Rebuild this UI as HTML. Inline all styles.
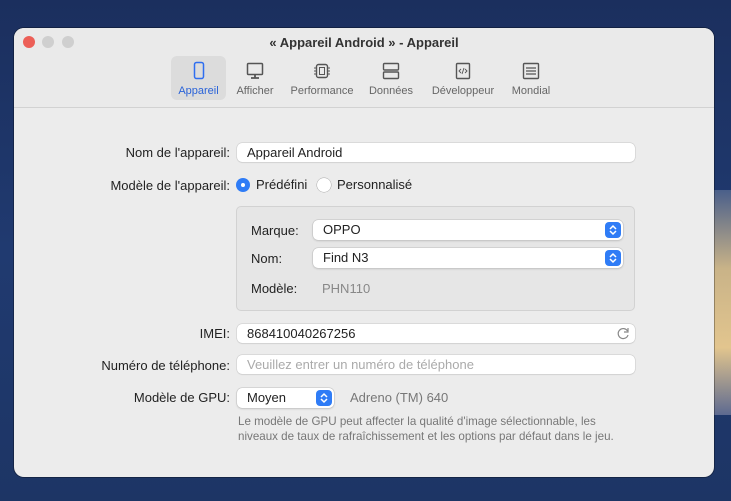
<!DOCTYPE html><html><head><meta charset="utf-8"><style>
*{margin:0;padding:0;box-sizing:border-box}
body{width:731px;height:501px;overflow:hidden;position:relative;font-family:"Liberation Sans",sans-serif;font-size:13px;color:#222;
background:linear-gradient(180deg,#1b2f5e 0%,#203a70 50%,#1d3565 100%)}
.strip{position:absolute;left:712px;top:190px;width:19px;height:225px;background:linear-gradient(180deg,#4a5f8a,#c9b388 35%,#e2c58e 70%,#5d6a90)}
.win{position:absolute;left:14px;top:28px;width:700px;height:449px;background:#ececec;border-radius:10px;overflow:hidden;box-shadow:0 0 0 1px rgba(0,0,0,.3)}
.tb{position:absolute;left:0;top:0;width:700px;height:80px;background:#eaeaea;border-bottom:1px solid #d2d2d2}
.dot{position:absolute;top:8px;width:12px;height:12px;border-radius:50%}
.title{position:absolute;top:7px;left:0;width:700px;text-align:center;font-weight:bold;font-size:13px;color:#333}
.tab{position:absolute;top:28px;height:44px;text-align:center;font-size:11px;color:#666}
.tab span{position:absolute;bottom:3px;left:0;right:0;white-space:nowrap}
.tab svg{position:absolute;top:5px;left:50%;margin-left:-10px}
.a{position:absolute}
.lbl{position:absolute;text-align:right;width:220px;left:0}
.fld{position:absolute;background:#fff;border-radius:5px;box-shadow:0 0 0 .5px #c8c8c8,0 1px 1px rgba(0,0,0,.08);padding-left:10px;line-height:19px}
.pop{position:absolute;background:#fff;border-radius:5px;box-shadow:0 0 0 .5px #c0c0c0,0 1px 2px rgba(0,0,0,.15);padding-left:10px;line-height:20px}
.arr{position:absolute;right:2px;top:2px;width:16px;height:16px;background:#2f7cf6;border-radius:4px}
</style></head><body>
<div class="strip"></div>
<div class="win">
<div class="tb">
<div class="dot" style="left:9px;background:#ec5f57"></div>
<div class="dot" style="left:28px;background:#cfcfcf"></div>
<div class="dot" style="left:48px;background:#cfcfcf"></div>
<div class="title">« Appareil Android » - Appareil</div>
<div class="tab" style="left:157px;width:55px;background:#dcdcdc;border-radius:6px;color:#2a63d8"><svg width="20" height="20"><rect x="5.5" y="1.5" width="9" height="16" rx="2" fill="none" stroke="#2f6ef0" stroke-width="1.5"/></svg><span>Appareil</span></div>
<div class="tab" style="left:218px;width:46px"><svg width="20" height="20"><rect x="2.5" y="2.5" width="15" height="11" rx="1" fill="none" stroke="#555" stroke-width="1.5"/><path d="M6 17h8M10 13v4" stroke="#555" stroke-width="1.8"/></svg><span>Afficher</span></div>
<div class="tab" style="left:273px;width:70px"><svg width="20" height="20"><rect x="4.5" y="3.5" width="11" height="13" rx="2" fill="none" stroke="#555" stroke-width="1.4"/><rect x="7.5" y="6.5" width="5" height="7" fill="none" stroke="#555"/><path d="M2 7h2.5M2 10h2.5M2 13h2.5M15.5 7h2.5M15.5 10h2.5M15.5 13h2.5" stroke="#555"/></svg><span>Performance</span></div>
<div class="tab" style="left:352px;width:50px"><svg width="20" height="20"><rect x="2.5" y="2.5" width="15" height="6.5" rx="1" fill="none" stroke="#555" stroke-width="1.4"/><rect x="2.5" y="11" width="15" height="6.5" rx="1" fill="none" stroke="#555" stroke-width="1.4"/></svg><span>Données</span></div>
<div class="tab" style="left:413px;width:72px"><svg width="20" height="20"><rect x="3.5" y="2.5" width="13" height="15" rx="1" fill="none" stroke="#555" stroke-width="1.4"/><path d="M8 8l-2 2 2 2M12 8l2 2-2 2M11 7l-2 6" fill="none" stroke="#555" stroke-width=".9"/></svg><span>Développeur</span></div>
<div class="tab" style="left:494px;width:46px"><svg width="20" height="20"><rect x="2.5" y="2.5" width="15" height="15" rx="1" fill="none" stroke="#555" stroke-width="1.4"/><path d="M5 7h10M5 10h10M5 13h10" stroke="#555" stroke-width="1.2"/></svg><span>Mondial</span></div>
</div>
<div class="lbl" style="top:117px;width:216px">Nom de l'appareil:</div>
<div class="fld" style="left:223px;top:115px;width:398px;height:19px">Appareil Android</div>
<div class="lbl" style="top:150px;width:216px">Modèle de l'appareil:</div>
<div class="a" style="left:222px;top:150px;width:14px;height:14px;border-radius:50%;background:#2f7cf6"><div style="position:absolute;left:5px;top:5px;width:4px;height:4px;background:#fff;border-radius:50%"></div></div>
<div class="a" style="left:242px;top:149px">Prédéfini</div>
<div class="a" style="left:303px;top:150px;width:14px;height:14px;border-radius:50%;background:#fff;box-shadow:0 0 0 .5px #aaa"></div>
<div class="a" style="left:323px;top:149px">Personnalisé</div>
<div class="a" style="left:222px;top:178px;width:399px;height:105px;border:1px solid #d2d2d2;border-radius:5px;background:#e6e6e6"></div>
<div class="a" style="left:237px;top:195px">Marque:</div>
<div class="pop" style="left:299px;top:192px;width:310px">OPPO<div class="arr"><svg width="16" height="16"><path d="M5 7l3-3 3 3M5 9l3 3 3-3" fill="none" stroke="#fff" stroke-width="1.5"/></svg></div></div>
<div class="a" style="left:237px;top:223px">Nom:</div>
<div class="pop" style="left:299px;top:220px;width:310px">Find N3<div class="arr"><svg width="16" height="16"><path d="M5 7l3-3 3 3M5 9l3 3 3-3" fill="none" stroke="#fff" stroke-width="1.5"/></svg></div></div>
<div class="a" style="left:237px;top:253px">Modèle:</div>
<div class="a" style="left:308px;top:253px;color:#888">PHN110</div>
<div class="lbl" style="top:298px;width:216px">IMEI:</div>
<div class="fld" style="left:223px;top:296px;width:398px;height:19px">868410040267256<svg style="position:absolute;right:5px;top:3px" width="13" height="13"><path d="M10.5 4A5 5 0 1 0 11 8" fill="none" stroke="#888" stroke-width="1.2"/><path d="M11 1v4H7" fill="none" stroke="#888" stroke-width="1.2"/></svg></div>
<div class="lbl" style="top:330px;width:216px">Numéro de téléphone:</div>
<div class="fld" style="left:223px;top:327px;width:398px;height:19px;color:#aaa">Veuillez entrer un numéro de téléphone</div>
<div class="lbl" style="top:362px;width:216px">Modèle de GPU:</div>
<div class="pop" style="left:223px;top:360px;width:97px">Moyen<div class="arr"><svg width="16" height="16"><path d="M5 7l3-3 3 3M5 9l3 3 3-3" fill="none" stroke="#fff" stroke-width="1.5"/></svg></div></div>
<div class="a" style="left:336px;top:362px;color:#777">Adreno (TM) 640</div>
<div class="a" style="left:224px;top:387px;font-size:11.6px;color:#777;line-height:14.5px;white-space:nowrap">Le modèle de GPU peut affecter la qualité d'image sélectionnable, les<br>niveaux de taux de rafraîchissement et les options par défaut dans le jeu.</div>
</div>
</body></html>
